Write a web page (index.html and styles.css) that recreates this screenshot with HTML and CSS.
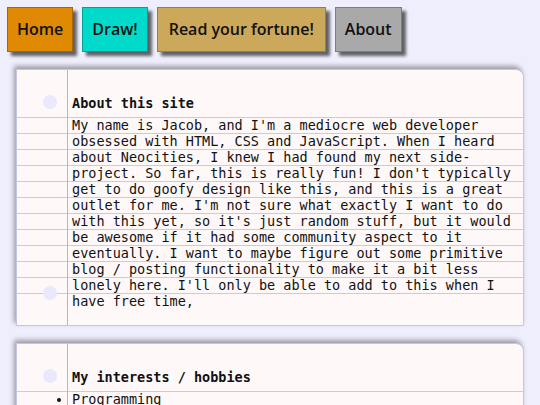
FILE: index.html
```html
<!DOCTYPE html>
<html lang="en">
<head>
    <meta charset="UTF-8">
    <meta name="viewport" content="width=device-width, initial-scale=1.0">
    <title>Jacob's little corner</title>
    <link rel="stylesheet" href="styles.css">
</head>
<body>
    <nav class="menu">
        <a href="#" class="btn btn-home">Home</a>
        <a href="#" class="btn btn-draw">Draw!</a>
        <a href="#" class="btn btn-fortune">Read your fortune!</a>
        <a href="#" class="btn btn-about">About</a>
    </nav>

    <section class="page">
        <h2>About this site</h2>
        <p>My name is Jacob, and I'm a mediocre web developer obsessed with HTML, CSS and JavaScript. When I heard about Neocities, I knew I had found my next side-project. So far, this is really fun! I don't typically get to do goofy design like this, and this is a great outlet for me. I'm not sure what exactly I want to do with this yet, so it's just random stuff, but it would be awesome if it had some community aspect to it eventually. I want to maybe figure out some primitive blog / posting functionality to make it a bit less lonely here. I'll only be able to add to this when I have free time,</p>
    </section>

    <section class="page">
        <h2>My interests / hobbies</h2>
        <ul>
            <li>Programming</li>
            <li>Drawing</li>
            <li>Video games</li>
        </ul>
    </section>
</body>
</html>
```

FILE: styles.css
```css
* {
    box-sizing: border-box;
}

body {
    margin: 0;
    background: #eeeefd;
    color: #111;
    font-family: "DejaVu Sans Mono", "Liberation Mono", monospace;
    font-size: 13.5px;
}

/* top buttons */
.menu {
    display: flex;
    gap: 9px;
    padding: 7px 0 0 7px;
}

.btn {
    display: block;
    padding: 10px 9px;
    line-height: 23px;
    font-family: "Comic Sans MS", "Open Sans", sans-serif;
    font-size: 16px;
    font-weight: 600;
    color: #111;
    text-decoration: none;
    border: 1px solid rgba(0, 0, 0, 0.25);
    box-shadow: 4px 4px 3px rgba(0, 0, 0, 0.6);
}

.btn-home { background: #e08a04; }
.btn-draw { background: #00dacb; }
.btn-fortune { background: #cca85a; padding: 10px 11px; }
.btn-about { background: #a9a9a9; }

/* notebook paper cards */
.page {
    position: relative;
    margin: 17px 16px 0;
    padding: 25px 0 16px;
    border: 1px solid #c6c6de;
    border-top-right-radius: 8px;
    background:
        linear-gradient(to right, transparent 50px, #eaa2a2 50px, #eaa2a2 51px, transparent 51px),
        #fff8f8;
    box-shadow: -2px -3px 5px rgba(0, 0, 0, 0.35);
}

/* binder holes */
.page::before,
.page::after {
    content: "";
    position: absolute;
    left: 26px;
    width: 14px;
    height: 14px;
    border-radius: 50%;
    background: #e9e9fb;
}

.page::before { top: 25px; }
.page::after { bottom: 25px; }

.page h2,
.page p,
.page ul {
    margin: 0;
    padding: 0 5px 0 55px;
    font-size: 13.5px;
    line-height: 16px;
}

.page h2 {
    margin-bottom: 6px;
}

.page p,
.page ul {
    background:
        linear-gradient(to right, transparent 50px, #eaa2a2 50px, #eaa2a2 51px, transparent 51px),
        repeating-linear-gradient(to bottom, #c8c8f0 0, #c8c8f0 1px, transparent 1px, transparent 16px);
}
```
